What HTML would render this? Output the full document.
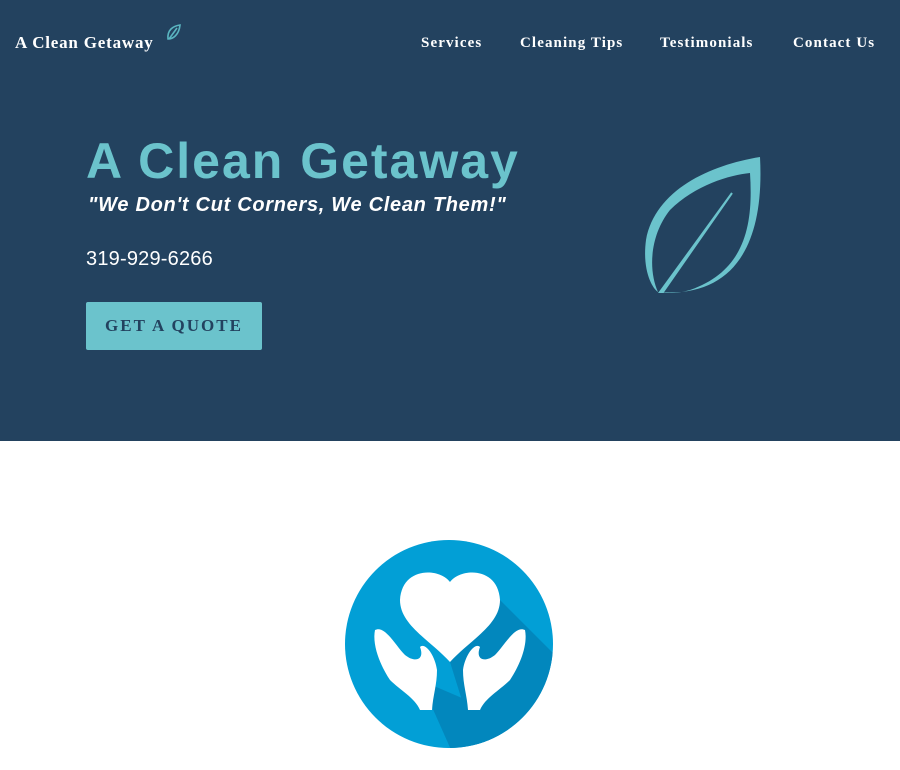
<!DOCTYPE html>
<html><head><meta charset="utf-8"><style>
body{margin:0;width:900px;height:770px;overflow:hidden;background:#fff;font-family:"Liberation Sans",sans-serif}
.hero{position:absolute;left:0;top:0;width:900px;height:441px;background:#23425f}
.brand{position:absolute;left:15px;top:33px;color:#fff;font-family:"Liberation Serif",serif;font-size:17px;letter-spacing:.8px;font-weight:bold}
.nav{position:absolute;top:35px;color:#fff;font-family:"Liberation Serif",serif;font-size:15px;font-weight:bold;letter-spacing:1.1px}
h1{position:absolute;left:86px;top:132px;margin:0;color:#6bc3cc;font-size:50px;font-weight:bold;letter-spacing:2px}
.tag{position:absolute;left:88px;top:194px;color:#fff;font-style:italic;font-weight:bold;font-size:20px;letter-spacing:.7px}
.ph{position:absolute;left:86px;top:248px;color:#fff;font-size:20px;letter-spacing:.2px}
.btn{position:absolute;left:86px;top:302px;width:176px;height:48px;background:#6bc3cc;border-radius:2px;color:#23425f;font-family:"Liberation Serif",serif;font-weight:bold;font-size:17px;letter-spacing:2px;text-align:center;line-height:48px}
</style></head><body>
<div class="hero">
<div class="brand">A Clean Getaway</div>
<svg style="position:absolute;left:165px;top:24px" width="16" height="18" viewBox="0 0 16 18"><path d="M15 1 C8 2 2 6 3 15 C8 15 14 11 15 1Z M12 4 L4 15" fill="none" stroke="#5ab5c0" stroke-width="1.6"/></svg>
<div class="nav" style="left:421px">Services</div>
<div class="nav" style="left:520px">Cleaning Tips</div>
<div class="nav" style="left:660px">Testimonials</div>
<div class="nav" style="left:793px">Contact Us</div>
<h1>A Clean Getaway</h1>
<div class="tag">"We Don't Cut Corners, We Clean Them!"</div>
<div class="ph">319-929-6266</div>
<div class="btn">GET A QUOTE</div>
<svg style="position:absolute;left:620px;top:140px" width="160" height="170" viewBox="0 0 160 170">
<path d="M140 17 C90 25 35 50 26 100 C22 130 32 148 38 152 C28 130 30 95 50 70 C75 45 110 35 130 33 C133 80 128 130 70 150 C60 153 48 154 38 152 C110 158 145 110 140 17Z" fill="#6bc3cc"/>
<path d="M112 53 L40 152 L43 152 Z" fill="#6bc3cc" stroke="#6bc3cc" stroke-width="2"/>
</svg>
</div>
<svg style="position:absolute;left:340px;top:530px" width="220" height="230" viewBox="0 0 220 230">
<defs><clipPath id="c"><circle cx="109" cy="114" r="104"/></clipPath></defs>
<circle cx="109" cy="114" r="104" fill="#029fd6"/>
<g clip-path="url(#c)"><path d="M150 60 L260 170 L150 260 L110 132 Z" fill="#0287bd"/><path d="M80 150 L150 180 L180 240 L120 240 Z" fill="#0287bd"/></g>
<path d="M110 52 C100 38 62 36 60 70 C60 95 90 110 110 132 C130 110 160 95 160 70 C158 36 120 38 110 52Z" fill="#fff"/>
<path d="M35 100 C45 95 55 115 65 125 C75 133 85 130 80 117 C85 112 95 125 97 140 C97 155 93 165 92 180 L80 180 C75 168 60 160 50 150 C40 135 32 115 35 100Z" fill="#fff"/>
<path d="M185 100 C175 95 165 115 155 125 C145 133 135 130 140 117 C135 112 125 125 123 140 C123 155 127 165 128 180 L140 180 C145 168 160 160 170 150 C180 135 188 115 185 100Z" fill="#fff"/>
</svg>
</body></html>
